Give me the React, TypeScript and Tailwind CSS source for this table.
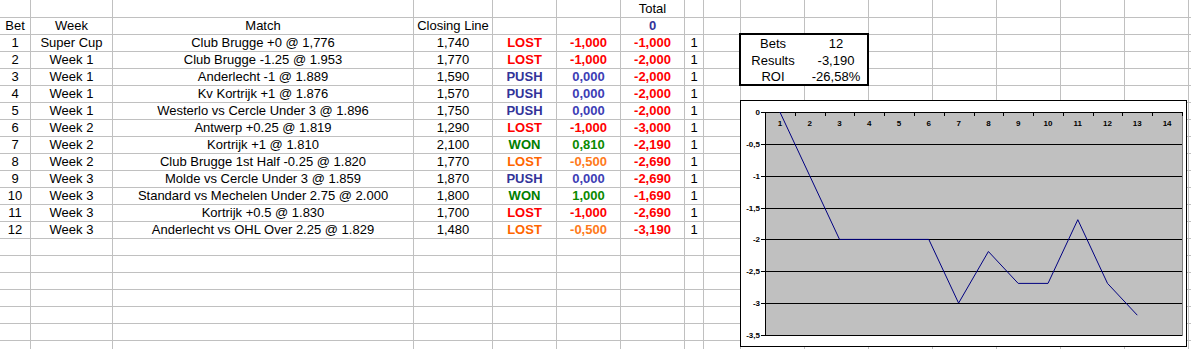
import React from "react";

type Result = "LOST" | "HALF" | "PUSH" | "WON";

interface Bet {
	week: string;
	match: string;
	closing: string;
	result: Result;
	value: string;
	total: string;
	cumulative: number;
}

const bets: Bet[] = [
	{ week: "Super Cup", match: "Club Brugge +0 @ 1,776", closing: "1,740", result: "LOST", value: "-1,000", total: "-1,000", cumulative: -1 },
	{ week: "Week 1", match: "Club Brugge -1.25 @ 1.953", closing: "1,770", result: "LOST", value: "-1,000", total: "-2,000", cumulative: -2 },
	{ week: "Week 1", match: "Anderlecht -1 @ 1.889", closing: "1,590", result: "PUSH", value: "0,000", total: "-2,000", cumulative: -2 },
	{ week: "Week 1", match: "Kv Kortrijk +1 @ 1.876", closing: "1,570", result: "PUSH", value: "0,000", total: "-2,000", cumulative: -2 },
	{ week: "Week 1", match: "Westerlo vs Cercle Under 3 @ 1.896", closing: "1,750", result: "PUSH", value: "0,000", total: "-2,000", cumulative: -2 },
	{ week: "Week 2", match: "Antwerp +0.25 @ 1.819", closing: "1,290", result: "LOST", value: "-1,000", total: "-3,000", cumulative: -3 },
	{ week: "Week 2", match: "Kortrijk +1 @ 1.810", closing: "2,100", result: "WON", value: "0,810", total: "-2,190", cumulative: -2.19 },
	{ week: "Week 2", match: "Club Brugge 1st Half -0.25 @ 1.820", closing: "1,770", result: "HALF", value: "-0,500", total: "-2,690", cumulative: -2.69 },
	{ week: "Week 3", match: "Molde vs Cercle Under 3 @ 1.859", closing: "1,870", result: "PUSH", value: "0,000", total: "-2,690", cumulative: -2.69 },
	{ week: "Week 3", match: "Standard vs Mechelen Under 2.75 @ 2.000", closing: "1,800", result: "WON", value: "1,000", total: "-1,690", cumulative: -1.69 },
	{ week: "Week 3", match: "Kortrijk +0.5 @ 1.830", closing: "1,700", result: "LOST", value: "-1,000", total: "-2,690", cumulative: -2.69 },
	{ week: "Week 3", match: "Anderlecht vs OHL Over 2.25 @ 1.829", closing: "1,480", result: "HALF", value: "-0,500", total: "-3,190", cumulative: -3.19 },
];

const resultStyle: Record<Result, { label: string; labelClass: string; valueClass: string }> = {
	LOST: { label: "LOST", labelClass: "font-bold text-[#ff0000]", valueClass: "font-bold text-[#ff0000]" },
	HALF: { label: "LOST", labelClass: "font-bold text-[#ff6600]", valueClass: "font-bold text-[#ff7a1a]" },
	PUSH: { label: "PUSH", labelClass: "font-bold text-[#333399]", valueClass: "font-bold text-[#3d3db5]" },
	WON: { label: "WON", labelClass: "font-bold text-[#008000]", valueClass: "font-bold text-[#0a8a00]" },
};

type CellData = { text: string; className?: string };

const ROWS = 21;
const COLS = 17;

// first 9 columns of each sheet row, the rest are empty
function sheetRow(r: number): CellData[] {
	const empty: CellData[] = Array.from({ length: 9 }, () => ({ text: "" }));
	if (r === 1) {
		empty[6] = { text: "Total" };
		return empty;
	}
	if (r === 2) {
		return [
			{ text: "Bet" },
			{ text: "Week" },
			{ text: "Match" },
			{ text: "Closing Line" },
			{ text: "" },
			{ text: "" },
			{ text: "0", className: "font-bold text-[#333399]" },
			{ text: "" },
			{ text: "" },
		];
	}
	const bet = bets[r - 3];
	if (!bet) return empty;
	const style = resultStyle[bet.result];
	return [
		{ text: String(r - 2) },
		{ text: bet.week },
		{ text: bet.match },
		{ text: bet.closing },
		{ text: style.label, className: style.labelClass },
		{ text: bet.value, className: style.valueClass },
		{ text: bet.total, className: "font-bold text-[#ff0000]" },
		{ text: "1" },
		{ text: "" },
	];
}

function inStatsBox(r: number, c: number) {
	return (c === 10 || c === 11) && r >= 3 && r <= 5;
}

function StatsBox() {
	const stats = [
		["Bets", "12"],
		["Results", "-3,190"],
		["ROI", "-26,58%"],
	];
	return (
		<div className="relative z-10 col-start-10 col-span-2 row-start-3 row-span-3 -ml-[2px] -mt-[2px] grid h-[53px] w-[130px] grid-cols-[64px_62px] grid-rows-[17px_17px_15px] self-start justify-self-start border-2 border-black bg-white">
			{stats.map(([label, value]) => (
				<React.Fragment key={label}>
					<div className="flex items-center justify-center">{label}</div>
					<div className="flex items-center justify-center">{value}</div>
				</React.Fragment>
			))}
		</div>
	);
}

const W = 447;
const H = 247;
const PX0 = 25;
const PX1 = 442;
const PY0 = 12;
const PY1 = 235;
const CAT_W = (PX1 - PX0) / 14;

const yOf = (v: number) => PY0 + (-v / 3.5) * (PY1 - PY0);
const xOf = (i: number) => PX0 + (i - 0.5) * CAT_W;

function ResultChart() {
	const series = [0, ...bets.map((b) => b.cumulative)];
	const ticks = [0, -0.5, -1, -1.5, -2, -2.5, -3, -3.5];
	const points = series.map((v, i) => `${xOf(i + 1).toFixed(1)},${yOf(v).toFixed(1)}`).join(" ");

	return (
		<div className="absolute left-[740px] top-[100px] z-20 h-[247px] w-[447px] bg-white">
			<svg width={W} height={H} viewBox={`0 0 ${W} ${H}`} fontFamily="'Liberation Sans', Arial, sans-serif">
				<rect x={0.5} y={0.5} width={W - 1} height={H - 1} fill="#fff" stroke="#000" />
				<rect x={PX0 + 0.5} y={PY0 + 0.5} width={PX1 - PX0} height={PY1 - PY0} fill="#c0c0c0" stroke="#808080" />
				{ticks.map((t) => {
					const y = Math.round(yOf(t)) + 0.5;
					return (
						<g key={t}>
							<line x1={PX0 - 4} x2={PX1} y1={y} y2={y} stroke="#000" />
							<text x={20} y={y} textAnchor="end" dominantBaseline="middle" fontSize={8} fontWeight={700}>
								{String(t).replace(".", ",")}
							</text>
						</g>
					);
				})}
				<line x1={PX0 + 0.5} x2={PX0 + 0.5} y1={PY0} y2={PY1 + 1} stroke="#000" />
				{Array.from({ length: 15 }, (_, k) => {
					const x = Math.round(PX0 + k * CAT_W) + 0.5;
					return <line key={k} x1={x} x2={x} y1={PY0} y2={PY0 + 4} stroke="#000" />;
				})}
				{Array.from({ length: 14 }, (_, k) => (
					<text key={k} x={xOf(k + 1)} y={PY0 + 12} textAnchor="middle" dominantBaseline="middle" fontSize={8} fontWeight={700}>
						{k + 1}
					</text>
				))}
				<polyline points={points} fill="none" stroke="#000080" strokeWidth={1} />
			</svg>
		</div>
	);
}

export default function App() {
	const cells: React.ReactNode[] = [];
	for (let r = 1; r <= ROWS; r++) {
		const row = sheetRow(r);
		for (let c = 1; c <= COLS; c++) {
			if (inStatsBox(r, c)) continue;
			const data = c <= 9 ? row[c - 1] : { text: "" };
			const cls = [
				"flex items-center justify-center overflow-hidden whitespace-nowrap border-[#c0c0c0]",
				c < COLS ? "border-r" : "",
				r < ROWS ? "border-b" : "",
				data.className ?? "text-black",
			].join(" ");
			cells.push(
				<div key={`${r}-${c}`} className={cls}>
					{data.text}
				</div>
			);
		}
	}

	return (
		<div className="relative h-[349px] w-[1191px] overflow-hidden bg-white font-['Liberation_Sans',Arial,sans-serif] text-[13px] leading-[16px] text-black">
			<div className="grid h-full grid-cols-[31px_82px_301px_79px_64px_64px_64px_19px_37px_repeat(7,64px)_1fr] grid-rows-[18px_repeat(19,17px)_8px]">
				{cells}
				<StatsBox />
			</div>
			<ResultChart />
		</div>
	);
}
